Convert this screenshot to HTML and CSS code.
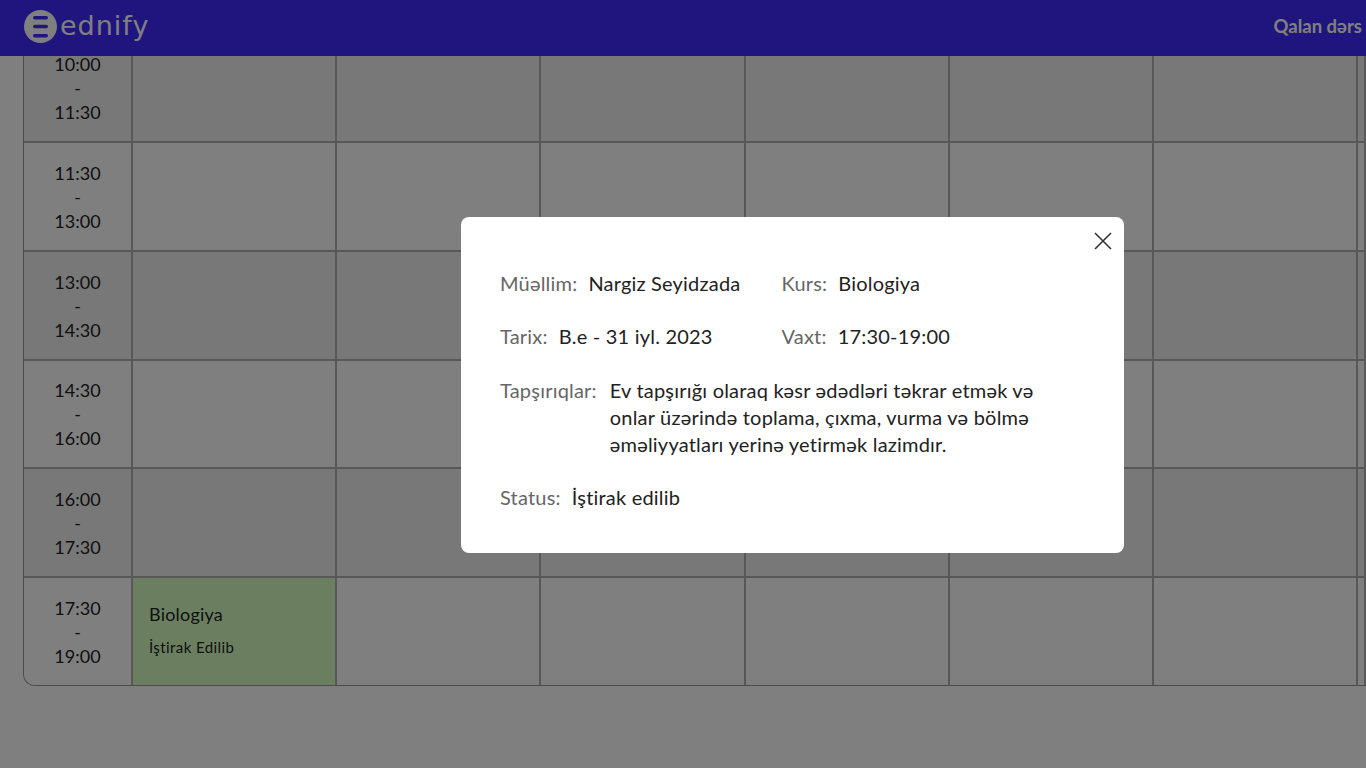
FILE: index.html
```html
<!DOCTYPE html>
<html lang="az">
<head>
	<meta charset="utf-8">
	<title>Ednify - Cədvəl</title>
	<link rel="stylesheet" href="styles.css">
</head>
<body>
	<header class="topbar">
		<div class="logo">
			<svg class="logo-mark" width="33" height="33" viewBox="0 0 33 33">
				<circle cx="16.5" cy="16.5" r="16.5" fill="#fff"/>
				<rect x="9" y="6" width="15" height="3.6" rx="1.8" fill="#4029fe"/>
				<rect x="9" y="14.7" width="15" height="3.6" rx="1.8" fill="#4029fe"/>
				<rect x="9" y="24" width="15" height="3.6" rx="1.8" fill="#4029fe"/>
			</svg>
			<span class="logo-text">ednify</span>
		</div>
		<span class="remaining">Qalan dərs</span>
	</header>

	<main class="schedule">
		<div class="time">10:00<br>-<br>11:30</div>
		<div class="cell"></div><div class="cell"></div><div class="cell"></div><div class="cell"></div><div class="cell"></div><div class="cell"></div><div class="cell"></div>

		<div class="time odd">11:30<br>-<br>13:00</div>
		<div class="cell odd"></div><div class="cell odd"></div><div class="cell odd"></div><div class="cell odd"></div><div class="cell odd"></div><div class="cell odd"></div><div class="cell odd"></div>

		<div class="time">13:00<br>-<br>14:30</div>
		<div class="cell"></div><div class="cell"></div><div class="cell"></div><div class="cell"></div><div class="cell"></div><div class="cell"></div><div class="cell"></div>

		<div class="time odd">14:30<br>-<br>16:00</div>
		<div class="cell odd"></div><div class="cell odd"></div><div class="cell odd"></div><div class="cell odd"></div><div class="cell odd"></div><div class="cell odd"></div><div class="cell odd"></div>

		<div class="time">16:00<br>-<br>17:30</div>
		<div class="cell"></div><div class="cell"></div><div class="cell"></div><div class="cell"></div><div class="cell"></div><div class="cell"></div><div class="cell"></div>

		<div class="time odd">17:30<br>-<br>19:00</div>
		<div class="cell lesson">
			<p class="lesson-name">Biologiya</p>
			<p class="lesson-status">İştirak Edilib</p>
		</div>
		<div class="cell odd"></div><div class="cell odd"></div><div class="cell odd"></div><div class="cell odd"></div><div class="cell odd"></div><div class="cell odd"></div>
	</main>

	<div class="overlay"></div>

	<div class="modal">
		<button class="close" type="button" aria-label="Bağla">
			<svg width="20" height="20" viewBox="0 0 20 20"><path d="M2 2 L18 18 M18 2 L2 18" stroke="#333" stroke-width="1.6" fill="none"/></svg>
		</button>
		<div class="modal-row two">
			<div class="pair"><span class="label">Müəllim:</span><span>Nargiz Seyidzada</span></div>
			<div class="pair"><span class="label">Kurs:</span><span>Biologiya</span></div>
		</div>
		<div class="modal-row two">
			<div class="pair"><span class="label">Tarix:</span><span>B.e - 31 iyl. 2023</span></div>
			<div class="pair"><span class="label">Vaxt:</span><span>17:30-19:00</span></div>
		</div>
		<div class="modal-row tasks">
			<div class="pair"><span class="label">Tapşırıqlar:</span><span class="task">Ev tapşırığı olaraq kəsr ədədləri təkrar etmək və onlar üzərində toplama, çıxma, vurma və bölmə əməliyyatları yerinə yetirmək lazimdır.</span></div>
		</div>
		<div class="modal-row">
			<div class="pair"><span class="label">Status:</span><span>İştirak edilib</span></div>
		</div>
	</div>
</body>
</html>
```

FILE: styles.css
```css
* {
	margin: 0;
	padding: 0;
	box-sizing: border-box;
}

html, body {
	height: 768px;
	overflow: hidden;
}

body {
	background-color: #fff;
	font-family: "Lato", "Open Sans", sans-serif;
	color: #222;
}

.topbar {
	position: relative;
	z-index: 2;
	height: 56px;
	padding: 0 4px 4px 24px;
	display: flex;
	align-items: center;
	justify-content: space-between;
	background-color: #4029fe;
	color: #fff;
}

.logo {
	display: flex;
	align-items: center;
	gap: 3px;
}

.logo-text {
	font-family: "DejaVu Sans", sans-serif;
	font-size: 27px;
	line-height: 34px;
	letter-spacing: 1px;
}

.remaining {
	font-size: 18.5px;
	font-weight: 700;
	color: #fff;
}

/* the last column is cut by the window edge */
.schedule {
	margin: -21.8px 0 0 23px;
	display: grid;
	grid-template-columns: 109px repeat(6, 204.2px) 1fr;
	grid-template-rows: repeat(5, 108.8px) 107px;
	border-left: 1px solid #999;
	border-bottom: 1px solid #999;
	border-bottom-left-radius: 12px;
}

.time, .cell {
	border-right: 2px solid #b0b0b0;
	border-bottom: 2px solid #b0b0b0;
	background-color: #f0f0f0;
}

.time.odd, .cell.odd {
	background-color: #fff;
}

.schedule > :nth-last-child(-n+8) {
	border-bottom: 0;
}

.schedule > :nth-last-child(8) {
	border-bottom-left-radius: 12px;
}

.time {
	padding-top: 17.8px;
	text-align: center;
	font-size: 18px;
	line-height: 24px;
}

.cell.lesson {
	background-color: #d6ffc0;
	padding: 24px 16px 0;
}

.lesson-name {
	font-size: 18px;
	line-height: 24px;
	letter-spacing: .2px;
}

.lesson-status {
	margin-top: 11px;
	font-size: 15px;
	line-height: 20px;
	letter-spacing: .4px;
}

.overlay {
	position: fixed;
	inset: 0;
	z-index: 3;
	background-color: rgba(0, 0, 0, .5);
}

.modal {
	position: fixed;
	z-index: 4;
	left: 461px;
	top: 217px;
	width: 663px;
	height: 336px;
	padding: 53px 39px 0;
	background-color: #fff;
	border-radius: 8px;
	font-size: 20px;
	line-height: 27px;
	letter-spacing: .2px;
	display: flex;
	flex-direction: column;
	gap: 26px;
}

.close {
	position: absolute;
	top: 14px;
	right: 11px;
	width: 20px;
	height: 20px;
	background: none;
	border: 0;
}

.modal-row.two {
	display: grid;
	grid-template-columns: 281.5px 1fr;
}

.modal-row.tasks {
	margin-top: 1px;
}

.pair {
	display: flex;
	gap: 11px;
}

.label {
	color: #666;
	white-space: nowrap;
}

.task {
	width: 440px;
	margin-left: 2px;
}
```
